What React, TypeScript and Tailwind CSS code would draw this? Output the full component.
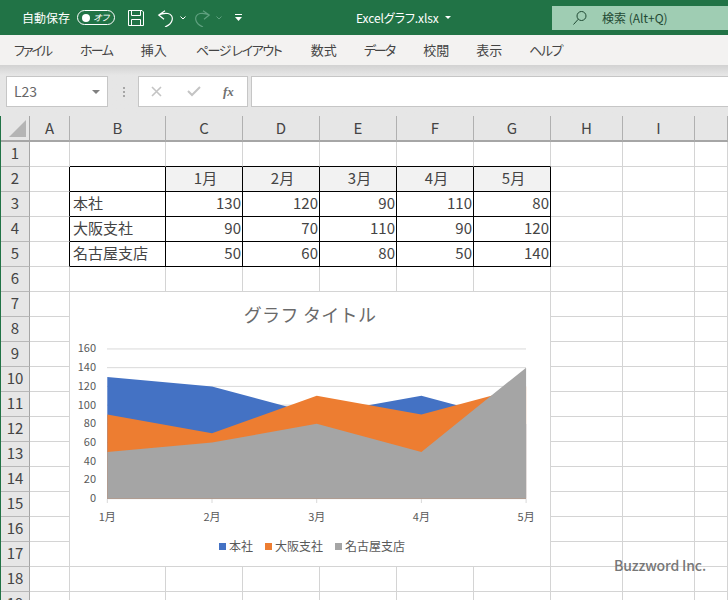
import React from 'react'

const font = "font-['Noto_Sans_CJK_JP','Noto_Sans',sans-serif]"

// kana in the ribbon sits tighter than the kanji, so each tab has its own tracking
const tabs = [
  { label: 'ファイル', className: 'tracking-[-2px] mr-[2px]' },
  { label: 'ホーム', className: 'tracking-[-1.7px] mr-[1.700px]' },
  { label: '挿入', className: 'mr-[2px]' },
  { label: 'ページ レイアウト', className: 'tracking-[-1.4px] mr-[2.400px]' },
  { label: '数式', className: '' },
  { label: 'データ', className: 'tracking-[-2px] mr-[2px]' },
  { label: '校閲', className: '' },
  { label: '表示', className: '' },
  { label: 'ヘルプ', className: 'tracking-[-1.5px]' },
]
const columns = ['A', 'B', 'C', 'D', 'E', 'F', 'G', 'H', 'I', '']

// sheet data, row number -> cells from column B to G
const sheet: Record<number, (string | number)[]> = {
  2: ['', '1月', '2月', '3月', '4月', '5月'],
  3: ['本社', 130, 120, 90, 110, 80],
  4: ['大阪支社', 90, 70, 110, 90, 120],
  5: ['名古屋支店', 50, 60, 80, 50, 140],
}

const series = [
  { name: '本社', color: '#4472c4', values: [130, 120, 90, 110, 80] },
  { name: '大阪支社', color: '#ed7d31', values: [90, 70, 110, 90, 120] },
  { name: '名古屋支店', color: '#a5a5a5', values: [50, 60, 80, 50, 140] },
]

const plotX = (i: number) => 107.3 + i * 104.7
const plotY = (v: number) => 498.7 - v * 0.936

function areaPoints(values: number[]) {
  const top = values.map((v, i) => `${plotX(i)},${plotY(v)}`).join(' ')
  return `${plotX(0)},${plotY(0)} ${top} ${plotX(4)},${plotY(0)}`
}

function AreaChart() {
  const labelStyle = { fontFamily: "'Noto Sans CJK JP', sans-serif" }
  return (
    <svg viewBox="70 292 480 274" className="absolute left-[69px] top-[176px] h-[274px] w-[480px] bg-white" style={labelStyle}>
      <text x="310" y="322" textAnchor="middle" fontSize="18" letterSpacing="0.3" fill="#6a6a6a">グラフ タイトル</text>
      {[0, 20, 40, 60, 80, 100, 120, 140, 160].map((v) => (
        <g key={v}>
          <line x1="107" x2="526" y1={plotY(v)} y2={plotY(v)} stroke="#d9d9d9" />
          <text x="96" y={plotY(v) + 3.5} textAnchor="end" fontSize="11" fill="#595959">{v}</text>
        </g>
      ))}
      {series.map((s) => (
        <polygon key={s.name} points={areaPoints(s.values)} fill={s.color} />
      ))}
      {[0, 1, 2, 3, 4].map((i) => (
        <g key={i}>
          <line x1={plotX(i)} x2={plotX(i)} y1="499" y2="503" stroke="#d9d9d9" />
          <text x={plotX(i)} y="521" textAnchor="middle" fontSize="11" fill="#595959">{i + 1}月</text>
        </g>
      ))}
      <rect x="219" y="543" width="7" height="7" fill="#4472c4" />
      <text x="229" y="551" fontSize="12" fill="#595959">本社</text>
      <rect x="265" y="543" width="7" height="7" fill="#ed7d31" />
      <text x="275" y="551" fontSize="12" fill="#595959">大阪支社</text>
      <rect x="335" y="543" width="7" height="7" fill="#a5a5a5" />
      <text x="345" y="551" fontSize="12" fill="#595959">名古屋支店</text>
    </svg>
  )
}

function TitleBar() {
  return (
    <div className="flex h-[35px] items-center bg-[#217346] pl-[22px] text-white">
      <span className="text-[12px] [font-feature-settings:'palt']">自動保存</span>
      <div className="ml-[7px] flex h-[15px] w-[38px] items-center justify-between rounded-full border border-white pl-[4px] pr-[5px]">
        <span className="h-[8px] w-[8px] rounded-full bg-white" />
        <span className="text-[9px] italic leading-none [font-feature-settings:'palt']">オフ</span>
      </div>
      <svg width="18" height="18" viewBox="0 0 18 18" className="ml-[12px]" fill="none" stroke="#fff" strokeWidth="1">
        <path d="M1.500 1.500h13.500l1.500 1.500v13.500h-15z" />
        <path d="M4.500 1.500v5h9v-5M4.500 16.500v-6h9v6" />
      </svg>
      <svg width="18" height="18" viewBox="0 0 18 18" className="ml-[12px]" fill="none" stroke="#fff" strokeWidth="1.200">
        <path d="M8 1.700 1.700 6 7 10.300M1.700 6C4 4.800 7 4 11 4.500c3.500.5 5 4 4 7-.7 2.500-3.500 5-7 6.500" />
      </svg>
      <svg width="6" height="4" viewBox="0 0 6 4" className="ml-[5px]" fill="none" stroke="#fff"><path d="m.5.5 2.500 2.500L5.500.5" /></svg>
      <svg width="18" height="18" viewBox="0 0 18 18" className="ml-[7px]" fill="none" stroke="#5fa07f" strokeWidth="1.200">
        <path d="M10 1.700 16.300 6 11 10.300M16.300 6C14 4.800 11 4 7 4.500c-3.500.5-5 4-4 7 .7 2.500 3.500 5 7 6.500" />
      </svg>
      <svg width="6" height="4" viewBox="0 0 6 4" className="ml-[5px]" fill="none" stroke="#5fa07f"><path d="m.5.5 2.500 2.500L5.500.5" /></svg>
      <svg width="7" height="7" viewBox="0 0 7 7" className="ml-[13px]" fill="#fff">
        <path d="M0 0h7v1H0zM0 3h7L3.500 7z" />
      </svg>
      <span className="ml-[114px] w-[82px] whitespace-nowrap text-[12px] tracking-[-0.1px] [font-feature-settings:'palt']">Excelグラフ.xlsx</span>
      <svg width="6" height="3" viewBox="0 0 6 3" className="ml-[7px]" fill="#fff"><path d="M0 0h6L3 3z" /></svg>
      <div className="ml-auto flex h-[24px] w-[176px] items-center bg-[#9fcdb3] pl-[20px] text-[#1f4a33]">
        <svg width="16" height="16" viewBox="0 0 16 16" fill="none" stroke="#1f4a33" strokeWidth="1">
          <circle cx="9.500" cy="6" r="4.500" />
          <path d="M6.300 9.200 1.500 14.500" />
        </svg>
        <span className="ml-[14px] text-[12px] [font-feature-settings:'palt']">検索 (Alt+Q)</span>
      </div>
    </div>
  )
}

function FormulaBar() {
  return (
    <div className="flex h-[51px] items-start bg-gradient-to-b from-[#d2d2d2] via-[#e6e6e6] via-20% to-[#e6e6e6] pt-[11px] pl-[6px]">
      <div className="flex h-[31px] w-[102px] items-center justify-between border border-[#c6c6c6] bg-white pl-[7px] pr-[7px]">
        <span className="text-[14px] text-[#666]">L23</span>
        <span className="h-0 w-0 border-x-[4px] border-t-[4px] border-x-transparent border-t-[#808080]" />
      </div>
      <div className="ml-[7px] flex h-[31px] w-[17px] flex-col items-center justify-center gap-[2px]">
        <span className="h-[2px] w-[2px] bg-[#a6a6a6]" />
        <span className="h-[2px] w-[2px] bg-[#a6a6a6]" />
        <span className="h-[2px] w-[2px] bg-[#a6a6a6]" />
      </div>
      <div className="ml-[6px] flex h-[31px] w-[110px] items-center border border-[#c6c6c6] bg-white">
        <svg width="11" height="11" viewBox="0 0 11 11" className="ml-[12px]" fill="none" stroke="#c4c4c4" strokeWidth="1.600">
          <path d="m1 1 9 9M10 1 1 10" />
        </svg>
        <svg width="14" height="11" viewBox="0 0 14 11" className="ml-[25px]" fill="none" stroke="#c4c4c4" strokeWidth="2">
          <path d="m1 5 4 4 8-8" />
        </svg>
        <span className="ml-[22px] font-['Liberation_Serif',serif] text-[13px] font-bold italic leading-none text-[#707070]">fx</span>
      </div>
      <div className="ml-[3px] h-[31px] flex-1 border border-r-0 border-[#c6c6c6] bg-white" />
    </div>
  )
}

function Sheet() {
  const rows = Array.from({ length: 19 }, (_, i) => i + 1)
  return (
    <div className="grid grid-cols-[29px_40px_96px_77px_77px_77px_77px_77px_72px_72px_33px] auto-rows-[25px] text-[15px] text-[#444]">
      {/* column header */}
      <div className="relative h-[26px] border-b-2 border-b-[#a6a6a6] border-r border-r-[#a6a6a6] bg-[#e6e6e6]">
        <span className="absolute bottom-[3px] right-[3px] h-0 w-0 border-b-[17px] border-l-[17px] border-b-[#b4b4b4] border-l-transparent" />
      </div>
      {columns.map((c, i) => (
        <div key={i} className="flex h-[26px] items-center justify-center border-b-2 border-b-[#a6a6a6] border-r border-r-[#b0b0b0] bg-[#e6e6e6] text-[#444]">
          {c}
        </div>
      ))}
      {rows.map((r) => (
        <React.Fragment key={r}>
          <div className="mt-[1px] flex h-[25px] items-center justify-center border-b border-r border-b-[#b8b8b8] border-r-[#a6a6a6] bg-[#e6e6e6] pb-[2px] text-[#444]">
            {r}
          </div>
          {columns.map((c, i) => {
            const value = sheet[r]?.[i - 1]
            const inTable = i >= 1 && i <= 6 && r >= 2 && r <= 5
            const blackRight = (i === 0 && r >= 2 && r <= 5) || inTable
            const blackBottom = (i >= 1 && i <= 6 && r === 1) || inTable
            const header = inTable && r === 2 && i > 1
            const numeric = typeof value === 'number'
            return (
              <div
                key={c + i}
                className={`mt-[1px] flex h-[25px] items-center overflow-hidden whitespace-nowrap border-b border-r pb-[2px] ${
                  blackRight ? 'border-r-black' : 'border-r-[#d4d4d4]'
                } ${blackBottom ? 'border-b-black' : 'border-b-[#d4d4d4]'} ${header ? 'justify-center bg-[#f2f2f2]' : ''} ${
                  numeric ? 'justify-end pr-[1px]' : 'pl-[3px]'
                }`}
              >
                {value}
              </div>
            )
          })}
        </React.Fragment>
      ))}
    </div>
  )
}

export default function App() {
  return (
    <div className={`h-[600px] w-[728px] overflow-hidden bg-white ${font}`}>
      <TitleBar />
      <nav className="flex h-[30px] items-center gap-[27px] bg-[#f3f2f1] pl-[14px] text-[13px] text-[#444] [font-feature-settings:'palt']">
        {tabs.map((t) => (
          <span key={t.label} className={`whitespace-nowrap ${t.className}`}>{t.label}</span>
        ))}
      </nav>
      <FormulaBar />
      <div className="relative border-l border-l-[#217346]">
        <Sheet />
        <AreaChart />
        <span className="absolute left-[613px] top-[439px] text-[14px] font-medium tracking-[-0.15px] text-[#777]">Buzzword Inc.</span>
      </div>
    </div>
  )
}
